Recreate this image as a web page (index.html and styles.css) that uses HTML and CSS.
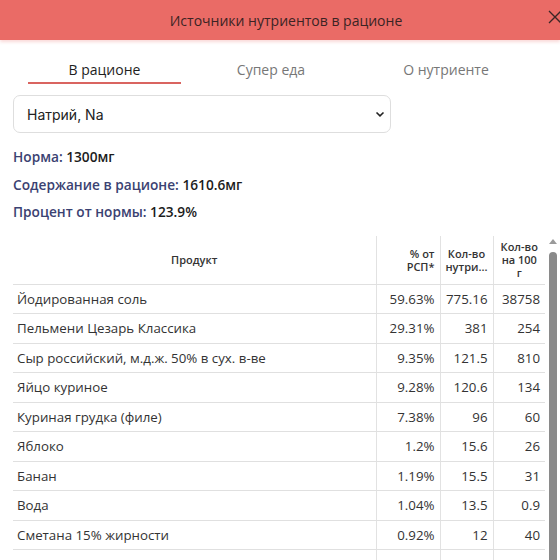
FILE: index.html
```html
<!DOCTYPE html>
<html lang="ru">
<head>
<meta charset="utf-8">
<link rel="stylesheet" href="styles.css">
</head>
<body>
<header class="topbar">
  <div class="title">Источники нутриентов в рационе</div>
  <svg class="close" width="16" height="16" viewBox="0 0 16 16"><path d="M2 2 L14 14 M14 2 L2 14" stroke="#3a2626" stroke-width="1.3" fill="none"/></svg>
</header>
<nav class="tabs">
  <div class="tab tab-1 active">В рационе</div>
  <div class="tab tab-2">Супер еда</div>
  <div class="tab tab-3">О нутриенте</div>
</nav>
<div class="content">
  <div class="select">
    <span>Натрий, Na</span>
    <svg width="10" height="8" viewBox="0 0 10 8"><path d="M1.5 2.5 L5 5.8 L8.5 2.5" stroke="#222" stroke-width="1.6" fill="none"/></svg>
  </div>
  <div class="stats">
    <p><span class="lbl">Норма:</span> 1300мг</p>
    <p><span class="lbl">Содержание в рационе:</span> 1610.6мг</p>
    <p><span class="lbl">Процент от нормы:</span> 123.9%</p>
  </div>
</div>
<div class="tablewrap">
  <table class="grid">
    <colgroup><col class="c1"><col class="c2"><col class="c3"><col class="c4"></colgroup>
    <thead>
      <tr>
        <th class="center">Продукт</th>
        <th class="right">% от<br>РСП*</th>
        <th class="center">Кол-во<br>нутри...</th>
        <th class="center">Кол-во<br>на 100<br>г</th>
      </tr>
    </thead>
    <tbody>
      <tr><td>Йодированная соль</td><td>59.63%</td><td>775.16</td><td>38758</td></tr>
      <tr><td>Пельмени Цезарь Классика</td><td>29.31%</td><td>381</td><td>254</td></tr>
      <tr><td>Сыр российский, м.д.ж. 50% в сух. в-ве</td><td>9.35%</td><td>121.5</td><td>810</td></tr>
      <tr><td>Яйцо куриное</td><td>9.28%</td><td>120.6</td><td>134</td></tr>
      <tr><td>Куриная грудка (филе)</td><td>7.38%</td><td>96</td><td>60</td></tr>
      <tr><td>Яблоко</td><td>1.2%</td><td>15.6</td><td>26</td></tr>
      <tr><td>Банан</td><td>1.19%</td><td>15.5</td><td>31</td></tr>
      <tr><td>Вода</td><td>1.04%</td><td>13.5</td><td>0.9</td></tr>
      <tr><td>Сметана 15% жирности</td><td>0.92%</td><td>12</td><td>40</td></tr>
      <tr><td>&nbsp;</td><td></td><td></td><td></td></tr>
    </tbody>
  </table>
  <div class="scrollbar">
    <div class="arrow"></div>
    <div class="thumb"></div>
  </div>
</div>
</body>
</html>
```
FILE: styles.css
```css
html, body {
  margin: 0;
  padding: 0;
  background: #fff;
  width: 560px;
  height: 560px;
  overflow: hidden;
  font-family: "Open Sans", "Noto Sans", sans-serif;
  color: #222;
}
.topbar {
  height: 40px;
  background: #ea6b66;
  display: flex;
  align-items: center;
  justify-content: center;
  box-shadow: 0 2px 3px rgba(234, 107, 102, 0.25);
  position: relative;
}
.title {
  font-size: 14px;
  font-weight: 500;
  color: #3a2424;
  padding-left: 12px;
}
.close {
  position: absolute;
  right: -3px;
  top: 9px;
}
.tabs {
  display: flex;
  padding-left: 28px;
  margin-top: 10px;
  height: 34px;
}
.tab {
  font-size: 14px;
  font-weight: 500;
  color: #777;
  text-align: center;
  line-height: 20px;
  padding-top: 10px;
  box-sizing: border-box;
}
.tab-1 { width: 153px; }
.tab-2 { width: 180px; }
.tab-3 { width: 170px; }
.tab.active {
  color: #1e1e1e;
  border-bottom: 2px solid #d96460;
}
.content {
  padding: 0 13px;
}
.select {
  margin-top: 11px;
  width: 378px;
  height: 38px;
  box-sizing: border-box;
  border: 1px solid #dedede;
  border-radius: 7px;
  display: flex;
  align-items: center;
  justify-content: space-between;
  padding: 0 5px 0 13px;
  font-family: "Inter", "Noto Sans", sans-serif;
  font-size: 14px;
  color: #222;
}
.stats {
  margin-top: 14px;
}
.stats p {
  margin: 0;
  height: 27.5px;
  line-height: 20px;
  font-size: 13.7px;
  font-weight: 600;
  color: #1c1c1c;
}
.lbl {
  color: #3b4272;
}
.tablewrap {
  display: flex;
  align-items: flex-start;
  margin-top: 6px;
  padding-left: 13px;
}
.grid {
  border-collapse: collapse;
  table-layout: fixed;
  width: 532px;
  font-size: 13.3px;
  color: #333;
}
.c1 { width: 363px; }
.c2 { width: 64px; }
.c3 { width: 53px; }
.c4 { width: 52px; }
.grid th {
  font-size: 11px;
  font-weight: 600;
  line-height: 13px;
  color: #333;
  height: 48px;
  padding: 0 5px;
  border-bottom: 1px solid #e0e0e0;
  vertical-align: middle;
}
.grid th + th, .grid td + td {
  border-left: 1px solid #e2e2e2;
}
.center { text-align: center; }
.right { text-align: right; }
.grid td {
  padding: 4px 6px 4.5px 4px;
  line-height: 20px;
  border-bottom: 1px solid #e0e0e0;
  white-space: nowrap;
}
.grid td + td {
  text-align: right;
  padding-right: 5px;
}
.scrollbar {
  width: 12px;
  margin-left: 2px;
  display: flex;
  flex-direction: column;
  align-items: center;
}
.arrow {
  width: 0;
  height: 0;
  border-left: 4px solid transparent;
  border-right: 4px solid transparent;
  border-bottom: 5px solid #9a9a9a;
  margin-top: 3px;
}
.thumb {
  margin-top: 8px;
  width: 8px;
  height: 320px;
  border-radius: 4px;
  background: #8a8a8a;
}
```
